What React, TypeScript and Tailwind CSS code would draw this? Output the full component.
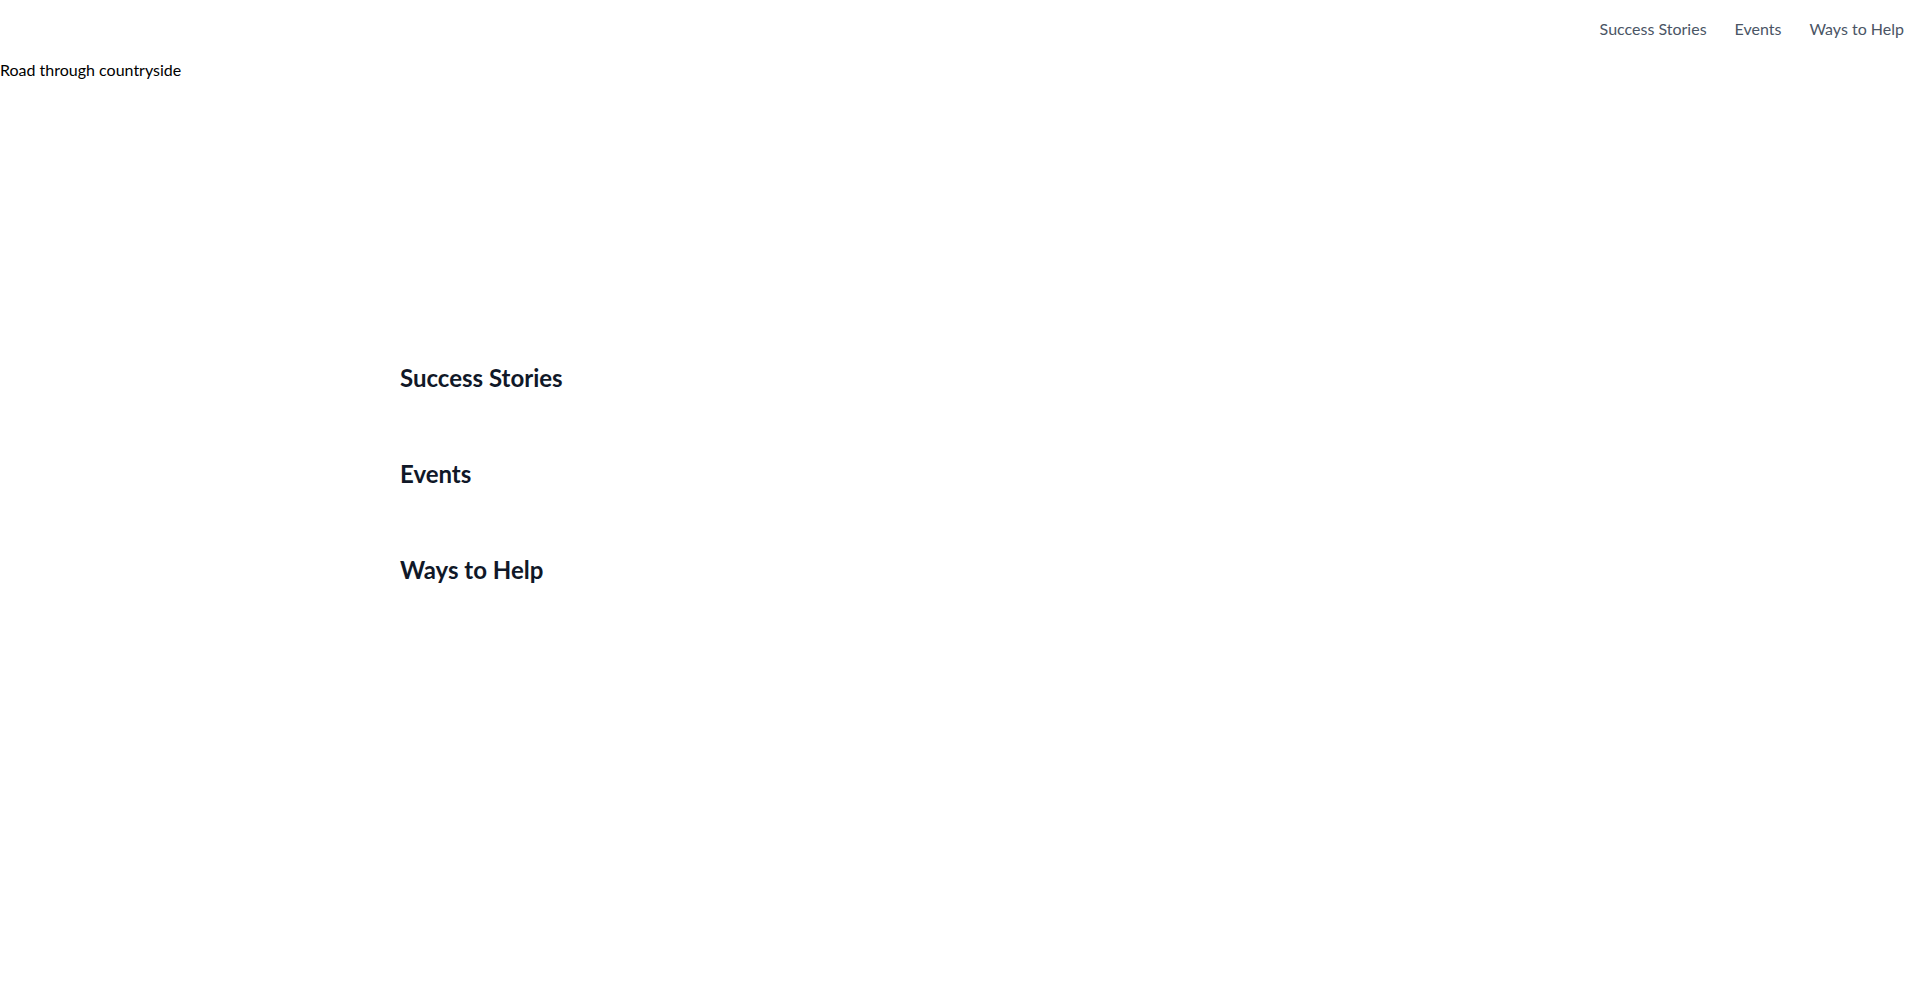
import React from "react";

const links = ["Success Stories", "Events", "Ways to Help"];

export default function App() {
    return (
        <div className="min-h-screen bg-white font-['Lato','Noto_Sans',sans-serif]">
            <nav className="flex justify-end gap-7 px-4 py-[17px]">
                {links.map((link) => (
                    <a key={link} href="#" className="text-base leading-6 text-gray-600">
                        {link}
                    </a>
                ))}
            </nav>

            <div className="h-64 text-base leading-6 text-black">Road through countryside</div>

            <main className="mx-auto max-w-6xl px-4 pt-4">
                {links.map((link) => (
                    <section key={link} className="py-8">
                        <h2 className="text-2xl leading-8 font-bold text-gray-900">{link}</h2>
                    </section>
                ))}
            </main>
        </div>
    );
}
